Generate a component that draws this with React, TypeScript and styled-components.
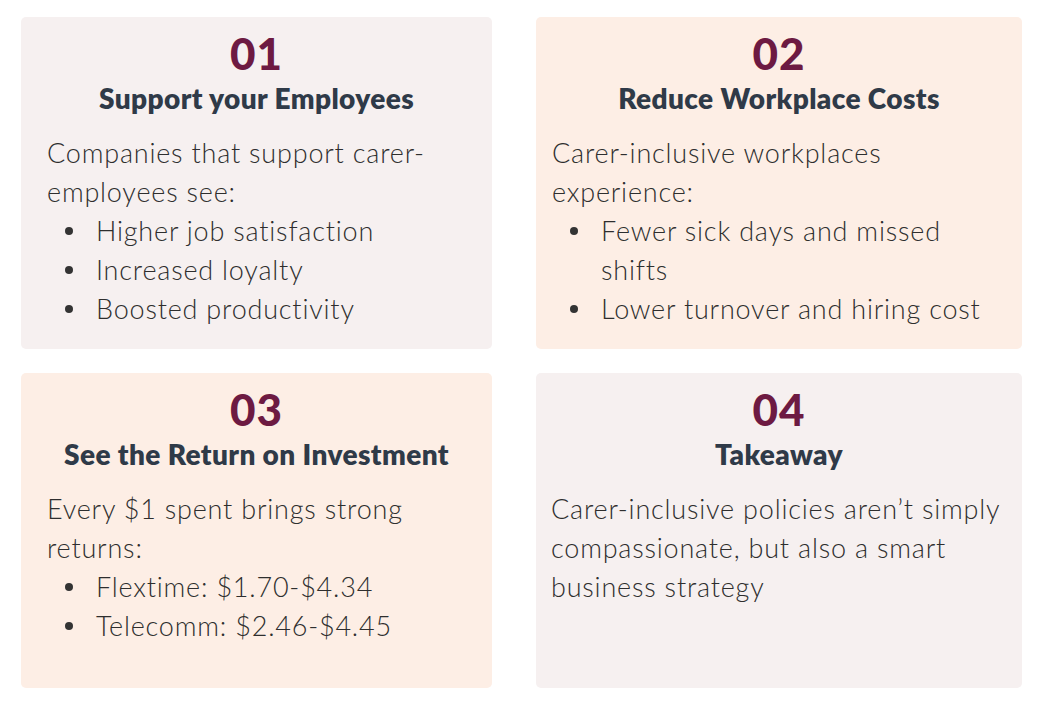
import React from 'react'
import styled, { createGlobalStyle } from 'styled-components'

const GlobalStyle = createGlobalStyle`
  html, body {
    margin: 0;
    padding: 0;
    background: #ffffff;
  }
  * {
    box-sizing: border-box;
  }
`

const Grid = styled.div`
  display: grid;
  grid-template-columns: 471px 486px;
  grid-template-rows: 332px 315px;
  column-gap: 44px;
  row-gap: 24px;
  padding: 17px 0 0 21px;
  font-family: Lato, "Liberation Sans", sans-serif;
`

const Card = styled.div<{ $tone: 'rose' | 'peach'; $inset: number }>`
  display: flex;
  flex-direction: column;
  background: ${p => (p.$tone === 'rose' ? '#f6f0f0' : '#fdeee5')};
  border-radius: 5px;
  padding: 14px ${p => p.$inset}px 0;
  white-space: nowrap;
`

const Number = styled.div`
  font-size: 44px;
  line-height: 44px;
  font-weight: 900;
  color: #6d1a42;
  text-align: center;
  letter-spacing: 1px;
`

const Title = styled.h2`
  margin: 7px 0 0;
  font-size: 28px;
  line-height: 32px;
  font-weight: 800;
  letter-spacing: 0.4px;
  color: #2f3a48;
  text-align: center;
`

const Body = styled.p`
  margin: 19px 0 0;
  font-size: 27px;
  line-height: 39px;
  font-weight: 300;
  letter-spacing: 0.8px;
  color: #2e2e2e;
`

const List = styled.ul`
  margin: 0;
  padding: 0 0 0 49px;
  list-style: none;
  font-size: 27px;
  line-height: 39px;
  font-weight: 300;
  letter-spacing: 0.8px;
  color: #2e2e2e;
`

const Item = styled.li`
  position: relative;
  &::before {
    content: '';
    position: absolute;
    left: -31px;
    top: 16px;
    width: 8px;
    height: 8px;
    border-radius: 50%;
    background: #333333;
  }
`

interface Point {
  num: string
  title: string
  lead: React.ReactNode
  items: React.ReactNode[]
  tone: 'rose' | 'peach'
  inset: number
}

const points: Point[] = [
  {
    num: '01',
    title: 'Support your Employees',
    lead: <>Companies that support carer-<br />employees see:</>,
    items: ['Higher job satisfaction', 'Increased loyalty', 'Boosted productivity'],
    tone: 'rose',
    inset: 26,
  },
  {
    num: '02',
    title: 'Reduce Workplace Costs',
    lead: <>Carer-inclusive workplaces<br />experience:</>,
    items: [<>Fewer sick days and missed<br />shifts</>, 'Lower turnover and hiring cost'],
    tone: 'peach',
    inset: 16,
  },
  {
    num: '03',
    title: 'See the Return on Investment',
    lead: <>Every $1 spent brings strong<br />returns:</>,
    items: ['Flextime: $1.70-$4.34', 'Telecomm: $2.46-$4.45'],
    tone: 'peach',
    inset: 26,
  },
  {
    num: '04',
    title: 'Takeaway',
    lead: <>Carer-inclusive policies aren’t simply<br />compassionate, but also a smart<br />business strategy</>,
    items: [],
    tone: 'rose',
    inset: 15,
  },
]

const App = () => {
  return (
    <>
      <GlobalStyle />
      <Grid>
        {points.map(pt => (
          <Card key={pt.num} $tone={pt.tone} $inset={pt.inset}>
            <Number>{pt.num}</Number>
            <Title>{pt.title}</Title>
            <Body>{pt.lead}</Body>
            {pt.items.length > 0 && (
              <List>
                {pt.items.map((it, i) => (
                  <Item key={i}>{it}</Item>
                ))}
              </List>
            )}
          </Card>
        ))}
      </Grid>
    </>
  )
}

export default App
